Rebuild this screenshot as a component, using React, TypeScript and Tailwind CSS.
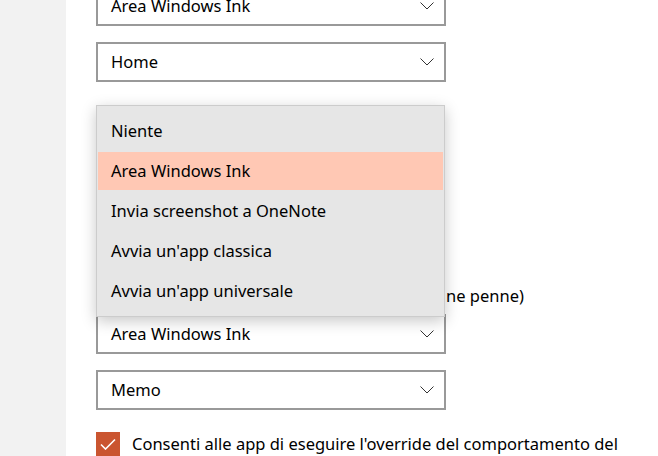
import React from "react";

const Chevron = () => (
  <svg width="14" height="8" viewBox="0 0 14 8" fill="none">
    <path d="M0.5 0.5 L7 7 L13.5 0.5" stroke="#333" strokeWidth="1" />
  </svg>
);

const Combo = ({ value }: { value: string }) => (
  <div className="flex h-[40px] w-[350px] items-center justify-between border-2 border-[#999999] bg-white pl-[13px] pr-[10px]">
    <span className="leading-none text-black">{value}</span>
    <Chevron />
  </div>
);

const items = [
  "Niente",
  "Area Windows Ink",
  "Invia screenshot a OneNote",
  "Avvia un'app classica",
  "Avvia un'app universale",
];

export default function App() {
  return (
    <div
      className="flex h-[456px] w-[658px] overflow-hidden bg-white text-[16.5px] text-black"
      style={{ fontFamily: '"Noto Sans", "Open Sans", sans-serif' }}
    >
      <div className="w-[66px] shrink-0 bg-[#f2f2f2]" />
      <div className="mt-[-14px] flex flex-col pl-[30px]">
        <Combo value="Area Windows Ink" />
        <div className="mt-[16px]">
          <Combo value="Home" />
        </div>
        <div className="mt-[24px] h-[22px]" />
        <div className="relative mt-[22px]">
          <div className="h-[40px] w-[349px] bg-white" />
          <div className="absolute left-0 top-[-45px] z-10 w-[349px] border border-[#cccccc] bg-[#e6e6e6] py-[5px] shadow-[0_4px_14px_rgba(0,0,0,0.22)]">
            {items.map((it) => (
              <div key={it} className="h-[40px] px-[1px] py-[1px]">
                <div
                  className={
                    "flex h-full items-center pl-[13px] " +
                    (it === "Area Windows Ink" ? "bg-[#ffc8b4]" : "")
                  }
                >
                  {it}
                </div>
              </div>
            ))}
          </div>
        </div>
        <p className="mt-[95px] flex h-[22px] whitespace-nowrap leading-[22px]">
          <span className="w-[350px] shrink-0" />
          <span>ne penne)</span>
        </p>
        <div className="mt-[7px]">
          <Combo value="Area Windows Ink" />
        </div>
        <div className="mt-[16px]">
          <Combo value="Memo" />
        </div>
        <div className="mt-[22px] flex items-start gap-[12px] whitespace-nowrap">
          <div className="flex h-[24px] w-[24px] shrink-0 items-center justify-center bg-[#ca5530]">
            <svg width="16" height="12" viewBox="0 0 16 12" fill="none">
              <path d="M1 6.5 L5.5 11 L15 1.5" stroke="#ffffff" strokeWidth="1.6" />
            </svg>
          </div>
          <span className="leading-[24px]">
            Consenti alle app di eseguire l'override del comportamento del
          </span>
        </div>
      </div>
    </div>
  );
}
